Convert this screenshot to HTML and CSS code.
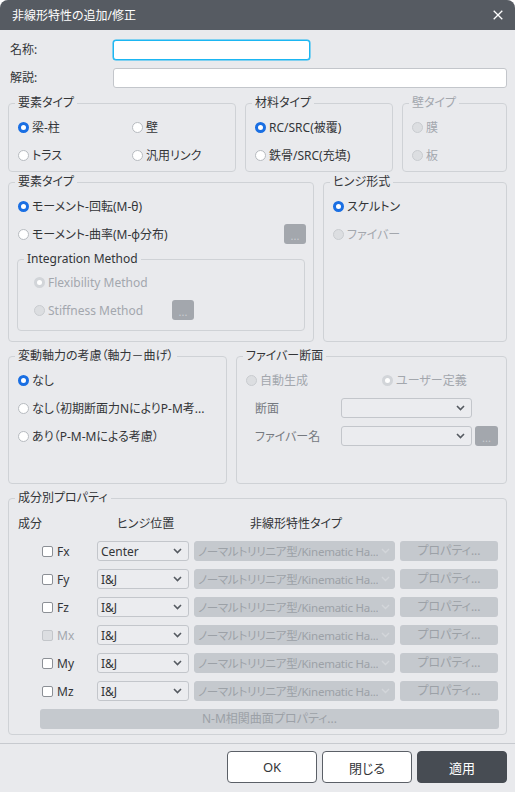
FILE: index.html
```html
<!DOCTYPE html>
<html lang="ja">
<head>
<meta charset="utf-8">
<title>非線形特性の追加/修正</title>
<link rel="stylesheet" href="styles.css">
</head>
<body>
<div class="dialog">
  <div class="titlebar">
    <span class="title">非線形特性の追加/修正</span>
    <svg class="close" width="10" height="10" viewBox="0 0 10 10"><path d="M0.7 0.7L9.3 9.3M9.3 0.7L0.7 9.3" stroke="#fff" stroke-width="1.3" fill="none"/></svg>
  </div>

  <div class="content">
    <div class="field-row"><span class="field-label">名称:</span><input class="text-input focused" type="text"></div>
    <div class="field-row"><span class="field-label">解説:</span><input class="text-input wide" type="text"></div>

    <div class="group-row row1">
      <fieldset class="group g-r1a">
        <legend>要素タイプ</legend>
        <div class="group-body grid2">
          <div class="opt"><span class="radio on"></span>梁-柱</div>
          <div class="opt"><span class="radio"></span>壁</div>
          <div class="opt"><span class="radio"></span>トラス</div>
          <div class="opt"><span class="radio"></span>汎用リンク</div>
        </div>
      </fieldset>
      <fieldset class="group g-r1b">
        <legend>材料タイプ</legend>
        <div class="group-body">
          <div class="opt"><span class="radio on"></span>RC/SRC(被覆)</div>
          <div class="opt"><span class="radio"></span>鉄骨/SRC(充填)</div>
        </div>
      </fieldset>
      <fieldset class="group g-r1c disabled">
        <legend>壁タイプ</legend>
        <div class="group-body">
          <div class="opt dim"><span class="radio dis"></span>膜</div>
          <div class="opt dim"><span class="radio dis"></span>板</div>
        </div>
      </fieldset>
    </div>

    <div class="group-row row2">
      <fieldset class="group g-r2a">
        <legend>要素タイプ</legend>
        <div class="group-body">
          <div class="opt"><span class="radio on"></span>モーメント-回転(M-θ)</div>
          <div class="opt spread"><span class="opt-in"><span class="radio"></span>モーメント-曲率(M-φ分布)</span><span class="dots-btn">...</span></div>
          <fieldset class="group inner">
            <legend>Integration Method</legend>
            <div class="group-body inner-body">
              <div class="opt dim"><span class="radio dis on"></span>Flexibility Method</div>
              <div class="opt dim"><span class="radio dis"></span><span class="stiff-label">Stiffness Method</span><span class="dots-btn">...</span></div>
            </div>
          </fieldset>
        </div>
      </fieldset>
      <fieldset class="group g-r2b">
        <legend>ヒンジ形式</legend>
        <div class="group-body hinge-body">
          <div class="opt"><span class="radio on"></span>スケルトン</div>
          <div class="opt dim"><span class="radio dis"></span>ファイバー</div>
        </div>
      </fieldset>
    </div>

    <div class="group-row row3">
      <fieldset class="group g-r3a">
        <legend>変動軸力の考慮（軸力－曲げ）</legend>
        <div class="group-body tall">
          <div class="opt"><span class="radio on"></span>なし</div>
          <div class="opt"><span class="radio"></span>なし（初期断面力NによりP-M考...</div>
          <div class="opt"><span class="radio"></span>あり（P-M-Mによる考慮）</div>
        </div>
      </fieldset>
      <fieldset class="group g-r3b">
        <legend>ファイバー断面</legend>
        <div class="group-body tall">
          <div class="fiber-radios">
            <div class="opt dim fiber-col"><span class="radio dis"></span>自動生成</div>
            <div class="opt dim"><span class="radio dis on"></span>ユーザー定義</div>
          </div>
          <div class="fiber-row">
            <span class="fiber-label">断面</span>
            <div class="select fiber-select"><span class="sel-text"></span><svg class="chev" width="9" height="6" viewBox="0 0 9 6"><path d="M1 1L4.5 4.5L8 1" stroke="#555a61" stroke-width="1.6" fill="none"/></svg></div>
          </div>
          <div class="fiber-row">
            <span class="fiber-label">ファイバー名</span>
            <div class="select fiber-select"><span class="sel-text"></span><svg class="chev" width="9" height="6" viewBox="0 0 9 6"><path d="M1 1L4.5 4.5L8 1" stroke="#555a61" stroke-width="1.6" fill="none"/></svg></div>
            <span class="dots-btn fiber-dots">...</span>
          </div>
        </div>
      </fieldset>
    </div>

    <div class="group-row row4">
      <fieldset class="group g-r4">
        <legend>成分別プロパティ</legend>
        <div class="group-body comp-body">
          <div class="comp-head">
            <span class="h-comp">成分</span>
            <span class="h-hinge">ヒンジ位置</span>
            <span class="h-type">非線形特性タイプ</span>
          </div>

          <div class="comp-row">
            <span class="comp-name"><span class="check"></span>Fx</span>
            <div class="select hinge-select"><span class="sel-text">Center</span><svg class="chev" width="9" height="6" viewBox="0 0 9 6"><path d="M1 1L4.5 4.5L8 1" stroke="#555a61" stroke-width="1.6" fill="none"/></svg></div>
            <div class="select type-select"><span class="sel-text">ノーマルトリリニア型/Kinematic Ha...</span><svg class="chev" width="9" height="6" viewBox="0 0 9 6"><path d="M1 1L4.5 4.5L8 1" stroke="#d3d6da" stroke-width="1.4" fill="none"/></svg></div>
            <span class="prop-btn">プロパティ...</span>
          </div>
          <div class="comp-row">
            <span class="comp-name"><span class="check"></span>Fy</span>
            <div class="select hinge-select"><span class="sel-text">I&amp;J</span><svg class="chev" width="9" height="6" viewBox="0 0 9 6"><path d="M1 1L4.5 4.5L8 1" stroke="#555a61" stroke-width="1.6" fill="none"/></svg></div>
            <div class="select type-select"><span class="sel-text">ノーマルトリリニア型/Kinematic Ha...</span><svg class="chev" width="9" height="6" viewBox="0 0 9 6"><path d="M1 1L4.5 4.5L8 1" stroke="#d3d6da" stroke-width="1.4" fill="none"/></svg></div>
            <span class="prop-btn">プロパティ...</span>
          </div>
          <div class="comp-row">
            <span class="comp-name"><span class="check"></span>Fz</span>
            <div class="select hinge-select"><span class="sel-text">I&amp;J</span><svg class="chev" width="9" height="6" viewBox="0 0 9 6"><path d="M1 1L4.5 4.5L8 1" stroke="#555a61" stroke-width="1.6" fill="none"/></svg></div>
            <div class="select type-select"><span class="sel-text">ノーマルトリリニア型/Kinematic Ha...</span><svg class="chev" width="9" height="6" viewBox="0 0 9 6"><path d="M1 1L4.5 4.5L8 1" stroke="#d3d6da" stroke-width="1.4" fill="none"/></svg></div>
            <span class="prop-btn">プロパティ...</span>
          </div>
          <div class="comp-row">
            <span class="comp-name dim"><span class="check dis"></span>Mx</span>
            <div class="select hinge-select"><span class="sel-text">I&amp;J</span><svg class="chev" width="9" height="6" viewBox="0 0 9 6"><path d="M1 1L4.5 4.5L8 1" stroke="#555a61" stroke-width="1.6" fill="none"/></svg></div>
            <div class="select type-select"><span class="sel-text">ノーマルトリリニア型/Kinematic Ha...</span><svg class="chev" width="9" height="6" viewBox="0 0 9 6"><path d="M1 1L4.5 4.5L8 1" stroke="#d3d6da" stroke-width="1.4" fill="none"/></svg></div>
            <span class="prop-btn">プロパティ...</span>
          </div>
          <div class="comp-row">
            <span class="comp-name"><span class="check"></span>My</span>
            <div class="select hinge-select"><span class="sel-text">I&amp;J</span><svg class="chev" width="9" height="6" viewBox="0 0 9 6"><path d="M1 1L4.5 4.5L8 1" stroke="#555a61" stroke-width="1.6" fill="none"/></svg></div>
            <div class="select type-select"><span class="sel-text">ノーマルトリリニア型/Kinematic Ha...</span><svg class="chev" width="9" height="6" viewBox="0 0 9 6"><path d="M1 1L4.5 4.5L8 1" stroke="#d3d6da" stroke-width="1.4" fill="none"/></svg></div>
            <span class="prop-btn">プロパティ...</span>
          </div>
          <div class="comp-row">
            <span class="comp-name"><span class="check"></span>Mz</span>
            <div class="select hinge-select"><span class="sel-text">I&amp;J</span><svg class="chev" width="9" height="6" viewBox="0 0 9 6"><path d="M1 1L4.5 4.5L8 1" stroke="#555a61" stroke-width="1.6" fill="none"/></svg></div>
            <div class="select type-select"><span class="sel-text">ノーマルトリリニア型/Kinematic Ha...</span><svg class="chev" width="9" height="6" viewBox="0 0 9 6"><path d="M1 1L4.5 4.5L8 1" stroke="#d3d6da" stroke-width="1.4" fill="none"/></svg></div>
            <span class="prop-btn">プロパティ...</span>
          </div>
          <div class="nm-btn">N-M相関曲面プロパティ...</div>
        </div>
      </fieldset>
    </div>
  </div>

  <div class="footer">
    <button class="btn">OK</button>
    <button class="btn">閉じる</button>
    <button class="btn primary">適用</button>
  </div>
</div>
</body>
</html>
```

FILE: styles.css
```css
* { box-sizing: border-box; }
html, body { margin: 0; padding: 0; background: #ffffff; }
body {
  font-family: "Noto Sans", "Noto Sans CJK JP", sans-serif;
  font-size: 12px;
  color: #333538;
  font-feature-settings: "palt";
}
.dialog {
  width: 515px;
  height: 792px;
  background: #e9eaed;
  border-radius: 8px 8px 0 0;
  overflow: hidden;
}
.titlebar {
  height: 30px;
  background: #565b62;
  color: #ffffff;
  display: flex;
  align-items: center;
  justify-content: space-between;
  padding: 0 12px 0 12px;
  font-size: 12px;
}
.close { display: block; }

.content { padding: 10px 8px 0 8px; }

.field-row { display: flex; align-items: center; height: 20px; }
.field-row + .field-row { margin-top: 8px; }
.field-label { width: 105px; padding-left: 2px; line-height: 20px; }
.text-input {
  height: 20px;
  margin: 0;
  padding: 0 4px;
  border: 1px solid #c3c6cb;
  border-radius: 3px;
  background: #ffffff;
  font: inherit;
  outline: none;
}
.text-input.focused { width: 197px; border-color: #1bb6f2; box-shadow: 0 0 0 0.5px #1bb6f2; }
.text-input.wide { width: 394px; }

.group-row { display: flex; gap: 9px; }
.row1 { margin-top: 8px; }
.row2 { margin-top: 3px; }
.row3 { margin-top: 7px; }
.row4 { margin-top: 7px; }

.group {
  margin: 0;
  min-width: 0;
  min-inline-size: 0;
  border: 1px solid #cfd2d6;
  border-radius: 4px;
  padding: 3px 0 2px 0;
}
.group legend {
  margin-left: 6px;
  padding: 0 3px;
  line-height: 14px;
  font-size: 12px;
}
.group.disabled legend { color: #a3a7ad; }
.group-body { padding-left: 9px; }

.g-r1a { width: 228px; }
.g-r1b { width: 148px; }
.g-r1c { flex: 1; }
.grid2 { display: grid; grid-template-columns: 114px 1fr; }

.opt { display: flex; align-items: center; height: 28px; gap: 3px; white-space: nowrap; }
.opt.dim { color: #a3a7ad; }
.opt.spread { justify-content: space-between; padding-right: 7px; }
.opt-in { display: flex; align-items: center; gap: 3px; }

.radio {
  width: 11px;
  height: 11px;
  border-radius: 50%;
  border: 1px solid #b7bbc0;
  background: #ffffff;
  flex: none;
}
.radio.on { border: 3px solid #1a6fe3; background: #ffffff; }
.radio.dis { border: 1px solid #c9ccd0; background: #dcdee1; }
.radio.dis.on { border: 3px solid #d2d5d9; background: #ffffff; }

.dots-btn {
  width: 22px;
  height: 20px;
  border-radius: 3px;
  background: #a3a7ad;
  color: #c9ccd1;
  font-size: 11px;
  line-height: 24px;
  text-align: center;
  flex: none;
}

.g-r2a { width: 306px; }
.g-r2b { flex: 1; }
.inner {
  margin: 4px 8px 8px -1px;
  padding: 2px 0 6px 0;
}
.inner-body { padding-left: 16px; }
.stiff-label { width: 121px; }
.hinge-body { min-height: 147px; }

.g-r3a { width: 219px; }
.g-r3b { flex: 1; }
.tall { height: 115px; }

.fiber-radios { display: flex; }
.fiber-col { width: 136px; }
.fiber-row { display: flex; align-items: center; height: 28px; padding-left: 9px; }
.fiber-label { width: 86px; color: #75797f; }
.fiber-select { width: 131px; }
.fiber-dots { margin-left: 3px; width: 23px; }

.select {
  height: 20px;
  border: 1px solid #c3c6cb;
  border-radius: 3px;
  background: #ebecef;
  display: flex;
  align-items: center;
  justify-content: space-between;
  padding: 0 6px 0 3px;
  overflow: hidden;
}
.sel-text { white-space: nowrap; overflow: hidden; }
.chev { display: block; flex: none; }

.g-r4 { flex: 1; padding-bottom: 5px; }
.comp-body { padding-left: 9px; padding-right: 8px; }
.comp-head { display: flex; align-items: center; height: 29px; }
.h-comp { width: 79px; }
.h-hinge { width: 92px; padding-left: 20px; }
.h-type { padding-left: 61px; }

.comp-row { display: flex; align-items: center; height: 28px; }
.comp-name { width: 79px; display: flex; align-items: center; gap: 4px; padding-left: 24px; }
.comp-name.dim { color: #a3a7ad; }
.check {
  width: 11px;
  height: 11px;
  border: 1px solid #8c9096;
  border-radius: 2px;
  background: #ffffff;
  flex: none;
}
.check.dis { border-color: #c3c6ca; background: #dcdee1; }
.hinge-select { width: 92px; }
.type-select {
  width: 201px;
  margin-left: 5px;
  background: #c5c9ce;
  border-color: #c5c9ce;
  color: #9ca1a7;
  padding-left: 3px;
  padding-right: 4px;
}
.type-select .sel-text { font-size: 11.5px; letter-spacing: -0.25px; }
.prop-btn {
  width: 98px;
  height: 20px;
  margin-left: 5px;
  border-radius: 3px;
  background: #c5c9ce;
  color: #9ca1a7;
  text-align: center;
  line-height: 20px;
}
.nm-btn {
  margin: 4px 0 0 22px;
  width: 459px;
  height: 20px;
  border-radius: 3px;
  background: #c5c9ce;
  color: #9ca1a7;
  text-align: center;
  line-height: 20px;
}

.footer {
  margin-top: 8px;
  border-top: 1px solid #c7cacf;
  display: flex;
  justify-content: flex-end;
  gap: 5px;
  padding: 7px 8px 0 0;
}
.btn {
  width: 90px;
  height: 32px;
  margin: 0;
  border: 1px solid #5b6067;
  border-radius: 4px;
  background: #ffffff;
  color: #333538;
  font-family: "Noto Sans", "Noto Sans CJK JP", sans-serif;
  font-size: 13px;
  font-feature-settings: "palt";
  padding: 0;
}
.btn.primary { background: #474c53; border-color: #474c53; color: #ffffff; }
```
